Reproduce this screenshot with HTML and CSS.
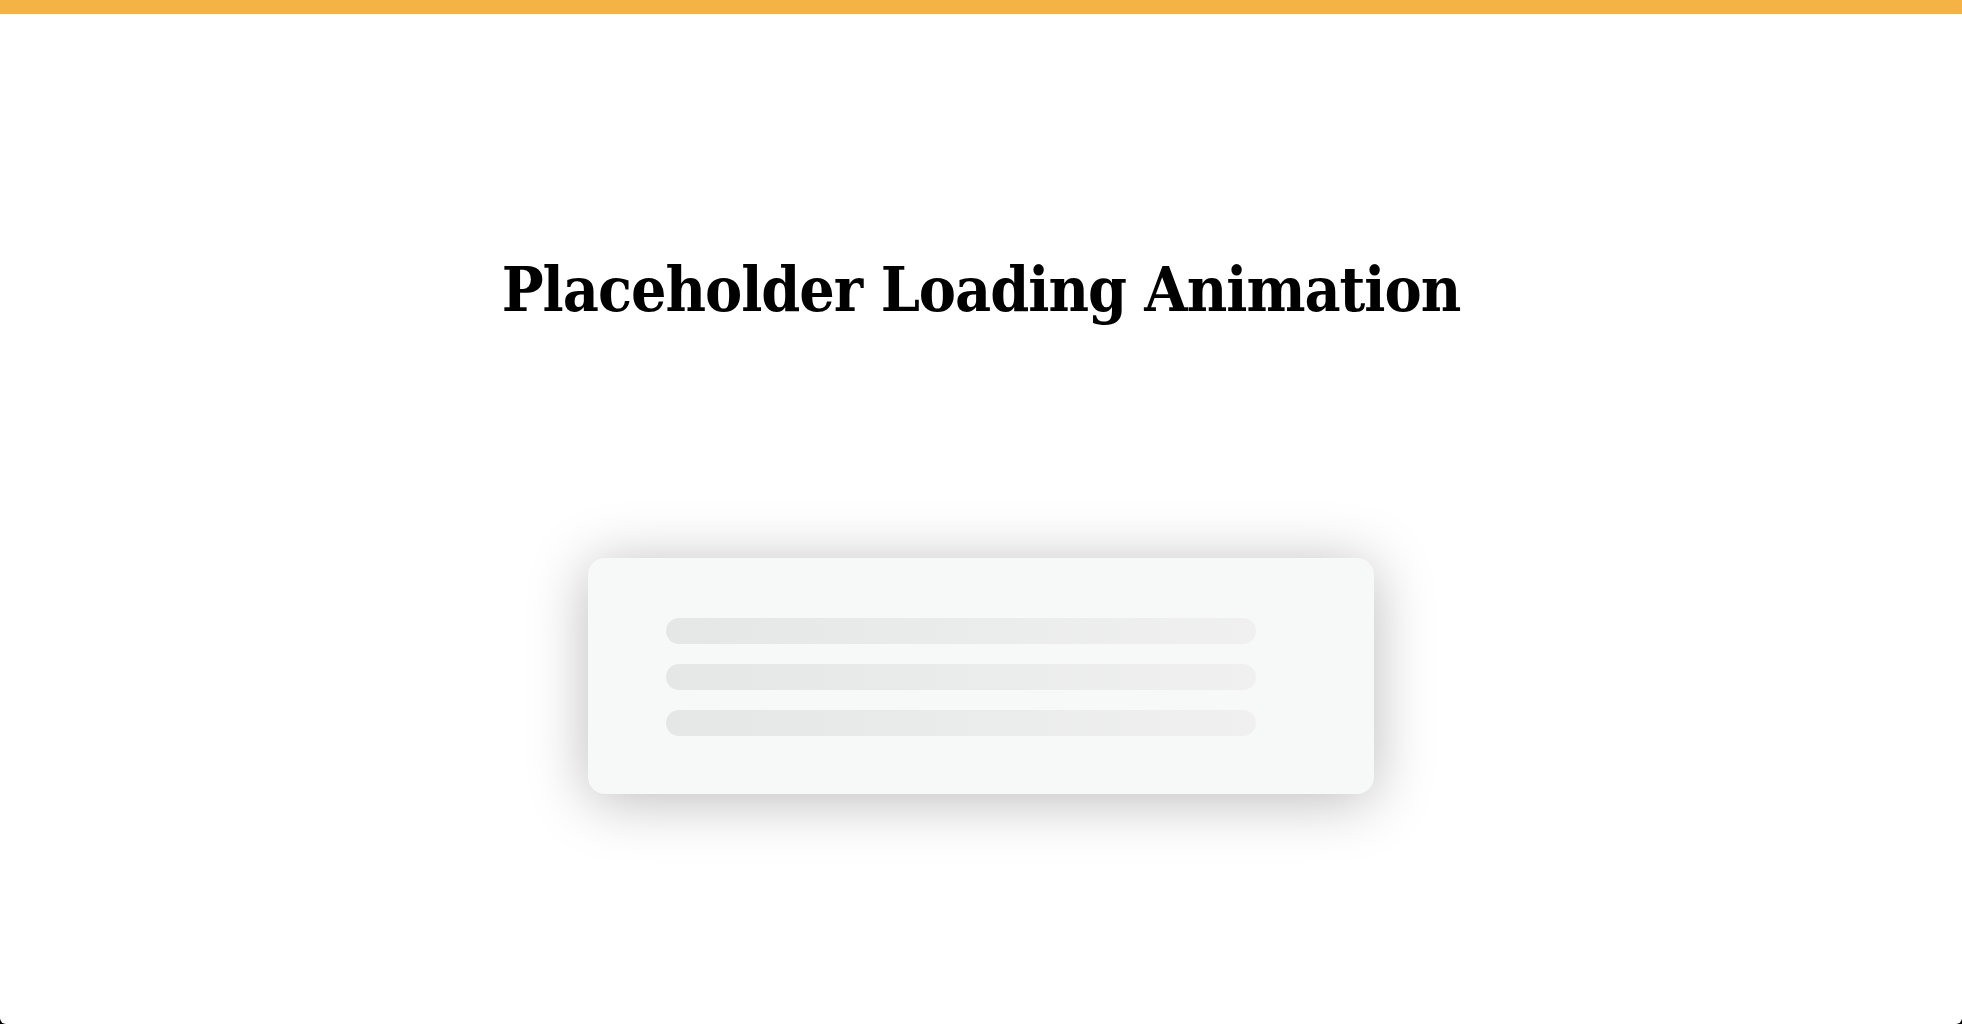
FILE: index.html
```html
<!DOCTYPE html>
<html lang="en">
<head>
<meta charset="utf-8">
<title>Placeholder Loading Animation</title>
<link rel="stylesheet" href="styles.css">
</head>
<body>
<div class="page">
  <div class="topbar"></div>
  <h1 class="title">Placeholder Loading Animation</h1>
  <div class="card">
    <div class="line"></div>
    <div class="line"></div>
    <div class="line"></div>
  </div>
</div>
</body>
</html>
```
FILE: styles.css
```css
html {
  background: #000;
}
body {
  margin: 0;
}
.page {
  background: #fff;
  height: 1024px;
  border-radius: 0 0 6px 6px;
  display: flex;
  flex-direction: column;
  align-items: center;
  overflow: hidden;
}
.topbar {
  align-self: stretch;
  height: 14px;
  background: #f5b245;
}
.title {
  margin: 238px 0 0;
  font-family: "DejaVu Serif", serif;
  font-stretch: condensed;
  font-weight: bold;
  font-size: 62px;
  line-height: 76px;
  color: #000;
  letter-spacing: -1px;
}
.card {
  margin-top: 230px;
  width: 786px;
  height: 236px;
  box-sizing: border-box;
  padding: 60px 118px 0 78px;
  background: #f7f9f8;
  border-radius: 17px;
  box-shadow: 0 6px 60px rgba(0, 0, 0, 0.27);
  display: flex;
  flex-direction: column;
  gap: 20px;
}
.line {
  height: 26px;
  border-radius: 13px;
  background: linear-gradient(90deg, #e5e6e6 0%, #f0f0f0 100%);
}
```
